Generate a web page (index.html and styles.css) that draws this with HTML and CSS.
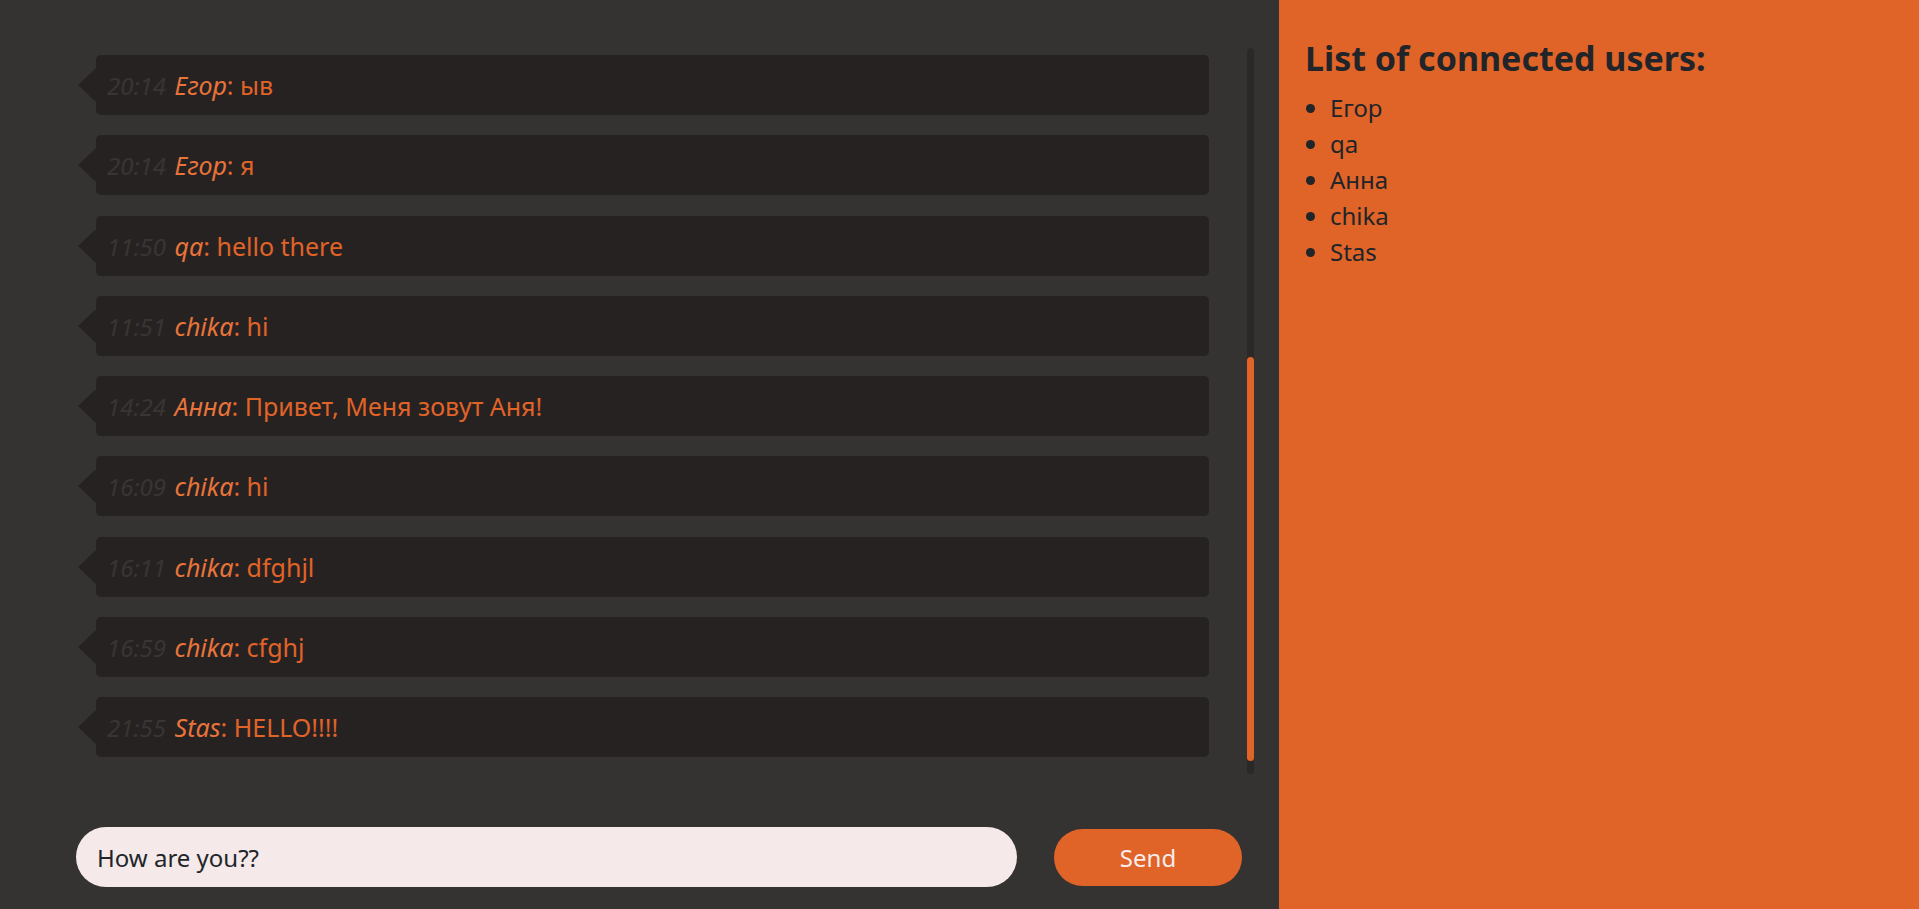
FILE: index.html
```html
<!DOCTYPE html>
<html lang="ru">
<head>
<meta charset="utf-8">
<title>Chat</title>
<link rel="stylesheet" href="styles.css">
</head>
<body>
<div class="app">
  <main class="chat">
    <div class="messages">
      <div class="messages-inner">
        <div class="msg"><span class="time">20:14</span> <em class="name">Егор</em>: ыв</div>
        <div class="msg"><span class="time">20:14</span> <em class="name">Егор</em>: я</div>
        <div class="msg"><span class="time">11:50</span> <em class="name">qa</em>: hello there</div>
        <div class="msg"><span class="time">11:51</span> <em class="name">chika</em>: hi</div>
        <div class="msg"><span class="time">14:24</span> <em class="name">Анна</em>: Привет, Меня зовут Аня!</div>
        <div class="msg"><span class="time">16:09</span> <em class="name">chika</em>: hi</div>
        <div class="msg"><span class="time">16:11</span> <em class="name">chika</em>: dfghjl</div>
        <div class="msg"><span class="time">16:59</span> <em class="name">chika</em>: cfghj</div>
        <div class="msg"><span class="time">21:55</span> <em class="name">Stas</em>: HELLO!!!!</div>
      </div>
      <div class="scrollbar"><div class="scrollbar-thumb"></div></div>
    </div>
    <form class="composer">
      <input class="composer-input" type="text" value="How are you??">
      <button class="composer-send" type="button">Send</button>
    </form>
  </main>
  <aside class="users">
    <h2 class="users-title">List of connected users:</h2>
    <ul class="users-list">
      <li>Егор</li>
      <li>qa</li>
      <li>Анна</li>
      <li>chika</li>
      <li>Stas</li>
    </ul>
  </aside>
</div>
</body>
</html>
```
FILE: styles.css
```css
* { box-sizing: border-box; }

html, body {
  margin: 0;
  height: 100%;
}

body {
  font-family: "Noto Sans", "Open Sans", sans-serif;
  font-size: 24px;
  line-height: 1.5;
  color: #212529;
  background: #353331;
}

.app {
  display: grid;
  grid-template-columns: 1279px 1fr;
  height: 909px;
}

.chat {
  display: flex;
  flex-direction: column;
  padding: 48px 25px 22px 76px;
  background: #353331;
  min-height: 0;
}

.messages {
  height: 726px;
  display: flex;
  overflow: hidden;
}

.messages-inner {
  flex: 1;
  display: flex;
  flex-direction: column;
  gap: 20.3px;
  padding: 7px 38px 0 20px;
}

.scrollbar {
  width: 7px;
  height: 100%;
  background: #2b2928;
  border-radius: 4px;
  display: flex;
  flex-direction: column;
  justify-content: flex-end;
  padding-bottom: 13px;
}

.scrollbar-thumb {
  height: 404px;
  background: #e06328;
  border-radius: 4px;
}

.msg {
  position: relative;
  height: 60px;
  padding: 12px 11px;
  background: #272222;
  border-radius: 5px;
  color: #e06328;
  white-space: nowrap;
  font-size: 25px;
  line-height: 36px;
}

.msg::before {
  content: "";
  position: absolute;
  left: -18px;
  top: 13px;
  border-right: 18px solid #272222;
  border-top: 17px solid transparent;
  border-bottom: 17px solid transparent;
}

.time {
  font-style: italic;
  font-size: 24px;
  color: #383533;
  margin-right: 2px;
}

.name {
  font-style: italic;
  color: #e8743a;
}

.composer {
  display: flex;
  align-items: center;
  margin: 53px 0 0 0;
  gap: 37px;
}

.composer-input {
  width: 941px;
  height: 60px;
  border: none;
  border-radius: 30px;
  background: #f5e9e9;
  padding: 0 21px;
  font-family: inherit;
  font-size: 24px;
  color: #212529;
  outline: none;
}

.composer-send {
  width: 188px;
  height: 57px;
  border: none;
  border-radius: 29px;
  background: #e06328;
  color: #f8ecec;
  font-family: inherit;
  font-size: 24px;
}

.users {
  background: #e06328;
  padding: 38px 26px;
}

.users-title {
  margin: 0 0 11px 0;
  font-size: 34px;
  line-height: 1.2;
  font-weight: 700;
  color: #212529;
}

.users-list {
  margin: 0;
  padding-left: 25px;
}
```
